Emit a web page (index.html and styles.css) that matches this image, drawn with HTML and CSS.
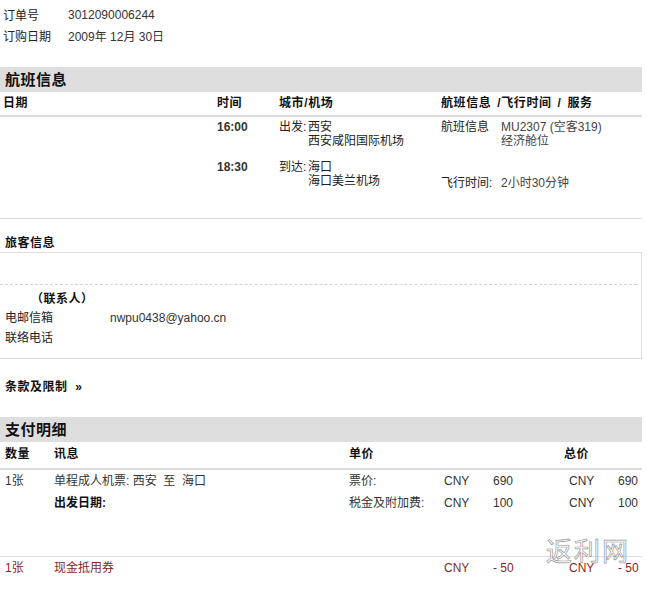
FILE: index.html
```html
<!DOCTYPE html>
<html lang="zh-CN">
<head>
<meta charset="utf-8">
<title>订单详情</title>
<link rel="stylesheet" href="styles.css">
</head>
<body>
<div class="page">
  <div class="order-info">
    <span class="label">订单号</span><span class="value">3012090006244</span>
    <span class="label">订购日期</span><span class="value">2009年 12月 30日</span>
  </div>

  <h2 class="bar bar-flight">航班信息</h2>
  <div class="flight-head">
    <span>日期</span><span>时间</span><span>城市/机场</span><span>航班信息 /飞行时间 / 服务</span>
  </div>
  <div class="flight-body">
    <div class="flight-row">
      <span></span>
      <span class="time">16:00</span>
      <div class="city"><span class="city-label">出发:</span><div><div>西安</div><div>西安咸阳国际机场</div></div></div>
      <div class="info"><span>航班信息</span><div class="info-val"><div>MU2307 (空客319)</div><div>经济舱位</div></div></div>
    </div>
    <div class="flight-row second">
      <span></span>
      <span class="time">18:30</span>
      <div class="city"><span class="city-label">到达:</span><div><div>海口</div><div>海口美兰机场</div></div></div>
      <div class="info duration"><span>飞行时间:</span><div class="info-val">2小时30分钟</div></div>
    </div>
  </div>

  <h3 class="section-title">旅客信息</h3>
  <div class="passenger-box">
    <div class="passenger-list"></div>
    <div class="contact">
      <div class="contact-title">（联系人）</div>
      <div class="contact-row"><span>电邮信箱</span><span>nwpu0438@yahoo.cn</span></div>
      <div class="contact-row"><span>联络电话</span><span></span></div>
    </div>
  </div>

  <div class="terms">条款及限制 &nbsp;»</div>

  <h2 class="bar">支付明细</h2>
  <div class="pay-head pay-grid">
    <span>数量</span><span>讯息</span><span>单价</span><span></span><span></span><span class="total-head">总价</span><span></span>
  </div>
  <div class="pay-body">
    <div class="pay-grid pay-row">
      <span>1张</span><span>单程成人机票: 西安 &nbsp;至 &nbsp;海口</span><span>票价:</span><span>CNY</span><span>690</span><span>CNY</span><span>690</span>
    </div>
    <div class="pay-grid pay-row">
      <span></span><span class="strong">出发日期:</span><span>税金及附加费:</span><span>CNY</span><span>100</span><span>CNY</span><span>100</span>
    </div>
  </div>
  <div class="pay-grid pay-row discount">
    <span>1张</span><span>现金抵用券</span><span></span><span>CNY</span><span>- 50</span><span>CNY</span><span>- 50</span>
  </div>

  <div class="watermark">返利网</div>
</div>
</body>
</html>
```

FILE: styles.css
```css
* { box-sizing: border-box; }

body {
  margin: 0;
  background: #fff;
  font-family: "Liberation Sans", "Noto Sans CJK SC", sans-serif;
  font-size: 12px;
  color: #222;
}

.page {
  position: relative;
  width: 642px;
  height: 589px;
  overflow: hidden;
}

/* order summary */
.order-info {
  display: grid;
  grid-template-columns: 65px auto;
  grid-auto-rows: 21px;
  align-items: center;
  padding: 4px 0 0 3px;
  color: #222;
}
.order-info .value { color: #333; }

/* grey section bars */
.bar {
  margin: 0;
  height: 25px;
  line-height: 25px;
  padding-left: 5px;
  background: #dedede;
  font-size: 15px;
  font-weight: bold;
  letter-spacing: 0.5px;
  color: #111;
}
.bar-flight { margin-top: 21px; }

/* flight table */
.flight-head,
.flight-row {
  display: grid;
  grid-template-columns: 214px 62px 162px auto;
  padding-left: 3px;
}
.flight-head {
  height: 25px;
  line-height: 23px;
  border-bottom: 2px solid #dcdcdc;
  font-weight: bold;
  letter-spacing: 0.6px;
  word-spacing: 2px;
  color: #111;
}
.flight-body {
  padding: 3px 0 28px;
  border-bottom: 1px solid #ddd;
  line-height: 14px;
}
.flight-row.second { margin-top: 12px; }
.time { font-weight: bold; color: #333; }
.city { display: flex; }
.city-label { width: 29px; }
.info { display: grid; grid-template-columns: 60px auto; }
.info-val { color: #444; }
.info.duration { padding-top: 16px; }

/* passengers */
.section-title {
  margin: 0;
  padding: 16px 5px 0;
  height: 33px;
  line-height: 17px;
  font-size: 12px;
  font-weight: bold;
  letter-spacing: 0.5px;
  color: #111;
}
.passenger-box {
  border-top: 1px solid #ddd;
  border-right: 1px solid #ddd;
  border-bottom: 1px solid #ddd;
}
.passenger-list {
  height: 32px;
  border-bottom: 1px dashed #d4d4d4;
  margin-right: 4px;
}
.contact { padding: 5px 0 10px 5px; }
.contact-title {
  height: 18px;
  line-height: 18px;
  padding-left: 26px;
  font-weight: bold;
  letter-spacing: 0.5px;
  color: #111;
}
.contact-row {
  display: grid;
  grid-template-columns: 105px auto;
  height: 20px;
  line-height: 20px;
}
.contact-row span:last-child { color: #333; }

.terms {
  margin: 19px 0 21px;
  padding-left: 5px;
  line-height: 18px;
  font-weight: bold;
  letter-spacing: 0.5px;
  color: #111;
}

/* payment table */
.pay-grid {
  display: grid;
  grid-template-columns: 49px 295px 95px 49px 76px 49px auto;
  padding-left: 5px;
}
.pay-head {
  height: 28px;
  line-height: 24px;
  border-bottom: 2px solid #dcdcdc;
  font-weight: bold;
  letter-spacing: 0.5px;
  color: #111;
}
.total-head { margin-left: -5px; }
.pay-body {
  padding-bottom: 42px;
  border-bottom: 1px solid #ddd;
}
.pay-row {
  height: 22px;
  line-height: 22px;
  color: #333;
}
.pay-row .strong { font-weight: bold; color: #111; }
.discount { color: #8a1f1f; }

/* outlined site mark in the corner */
.watermark {
  position: absolute;
  left: 546px;
  top: 534px;
  white-space: nowrap;
  font-size: 26px;
  letter-spacing: 2px;
  font-family: "Noto Sans CJK SC", sans-serif;
  color: rgba(255, 255, 255, 0.55);
  -webkit-text-stroke: 0.7px #9a9a9a;
  line-height: 32px;
}
```
